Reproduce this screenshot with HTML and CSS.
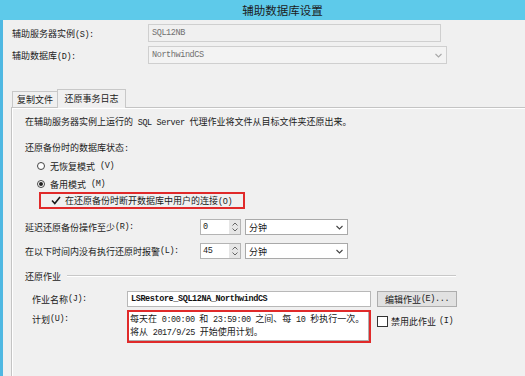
FILE: index.html
```html
<!DOCTYPE html>
<html>
<head>
<meta charset="utf-8">
<link rel="stylesheet" href="styles.css">
</head>
<body>
<div class="titlebar">辅助数据库设置</div>
<div class="main">
  <div class="top">
    <div class="row">
      <div class="lbl">辅助服务器实例<span class="m">(S):</span></div>
      <div class="field f1"><span class="m">SQL12NB</span></div>
    </div>
    <div class="row">
      <div class="lbl">辅助数据库<span class="m">(D):</span></div>
      <div class="field f2"><span class="m">NorthwindCS</span>
        <span class="dd dis"><svg width="7" height="5" viewBox="0 0 7 5"><path d="M0.5 1 L3.5 4 L6.5 1" fill="none" stroke="#a8a8a8" stroke-width="1.1"/></svg></span>
      </div>
    </div>
  </div>

  <div class="tabs">
    <div class="tab">复制文件</div>
    <div class="tab sel">还原事务日志</div>
  </div>

  <div class="panel">
    <div class="intro">在辅助服务器实例上运行的<span class="m"> SQL Server </span>代理作业将文件从目标文件夹还原出来。</div>
    <div class="state">还原备份时的数据库状态<span class="m">:</span></div>
    <div class="radio"><span class="rb"></span>无恢复模式<span class="m">(V)</span></div>
    <div class="radio"><span class="rb on"></span>备用模式<span class="m">(M)</span></div>
    <div class="chkrow">
      <svg class="tick" width="10" height="9" viewBox="0 0 10 9"><path d="M1 4.5 L3.8 7.5 L9 1" fill="none" stroke="#1a1a1a" stroke-width="1.6"/></svg>
      <span>在还原备份时断开数据库中用户的连接<span class="m">(O)</span></span>
    </div>

    <div class="numrow first">
      <div class="nlbl">延迟还原备份操作至少<span class="m">(R):</span></div>
      <div class="spin"><span class="sv m">0</span><span class="sb"><svg width="8" height="12" viewBox="0 0 8 12"><path d="M1.5 4.5 L4 2 L6.5 4.5 M1.5 7.5 L4 10 L6.5 7.5" fill="none" stroke="#666" stroke-width="1"/></svg></span></div>
      <div class="combo">分钟<svg width="7" height="5" viewBox="0 0 7 5"><path d="M0.5 1 L3.5 4 L6.5 1" fill="none" stroke="#444" stroke-width="1.1"/></svg></div>
    </div>
    <div class="numrow">
      <div class="nlbl">在以下时间内没有执行还原时报警<span class="m">(L):</span></div>
      <div class="spin"><span class="sv m">45</span><span class="sb"><svg width="8" height="12" viewBox="0 0 8 12"><path d="M1.5 4.5 L4 2 L6.5 4.5 M1.5 7.5 L4 10 L6.5 7.5" fill="none" stroke="#666" stroke-width="1"/></svg></span></div>
      <div class="combo">分钟<svg width="7" height="5" viewBox="0 0 7 5"><path d="M0.5 1 L3.5 4 L6.5 1" fill="none" stroke="#444" stroke-width="1.1"/></svg></div>
    </div>

    <div class="group">
      <span>还原作业</span><span class="gline"></span>
    </div>
    <div class="jobrow">
      <div class="jlbl">作业名称<span class="m">(J):</span></div>
      <div class="jinput"><span class="m b">LSRestore_SQL12NA_NorthwindCS</span></div>
      <div class="btn">编辑作业<span class="m">(E)...</span></div>
    </div>
    <div class="schedrow">
      <div class="jlbl sl">计划<span class="m">(U):</span></div>
      <div class="redbox">
        <div class="sched">
          <div>每天在<span class="m"> 0:00:00 </span>和<span class="m"> 23:59:00 </span>之间、每<span class="m"> 10 </span>秒执行一次。</div>
          <div>将从<span class="m"> 2017/9/25 </span>开始使用计划。</div>
        </div>
      </div>
      <div class="dis-chk"><span class="cb"></span>禁用此作业<span class="m">(I)</span></div>
    </div>
  </div>
</div>
</body>
</html>
```

FILE: styles.css
```css
* { box-sizing: border-box; margin: 0; padding: 0; }
body {
  width: 525px; height: 376px; overflow: hidden;
  background: #f0f0f0;
  font-family: "Noto Sans CJK SC", "Noto Sans CJK JP", sans-serif;
  font-size: 9px; color: #1a1a1a;
}
.m { font-family: "Liberation Mono", monospace; font-size: 8.5px; letter-spacing: -0.4px; white-space: pre; }
.b { font-weight: bold; }

.titlebar {
  height: 20px; background: #5ecaea;
  display: flex; align-items: center; justify-content: center;
  padding-left: 40px; font-size: 11.5px; color: #1c1c1c;
}
.main { border-left: 3px solid #4fb8e2; height: 356px; overflow: hidden; }

.top { padding: 4px 0 0 9px; display: flex; flex-direction: column; gap: 4px; }
.row { display: flex; align-items: center; }
.lbl { width: 136px; }
.field {
  height: 18px; border: 1px solid #cfcfcf; background: #f0f0f0; color: #707070;
  display: flex; align-items: center; padding-left: 3px;
}
.f1 { width: 293px; }
.f2 { width: 299px; background: #f3f3f3; justify-content: space-between; padding-right: 0; }
.dd { width: 15px; height: 16px; display: flex; align-items: center; justify-content: center; }

.tabs { margin-top: 25px; padding-left: 9px; display: flex; align-items: flex-end; height: 18px; }
.tab {
  height: 16px; width: 46px; border: 1px solid #c8c8c8; border-bottom: none;
  display: flex; align-items: center; justify-content: center; background: #f0f0f0;
}
.tab.sel {
  width: 69px; height: 19px; margin-bottom: -1px; position: relative; z-index: 1;
  border-left: 1px solid #c8c8c8; margin-left: -1px; padding-bottom: 2px;
}

.panel {
  margin-left: 8px; margin-right: -10px; height: 269px;
  border-top: 1px solid #c4c4c4; border-left: 1px solid #c4c4c4;
  box-shadow: inset 1px 1px 0 #fff;
  padding-left: 13px;
}
.intro { margin-top: 8px; height: 12px; line-height: 12px; white-space: nowrap; }
.state { margin-top: 14px; height: 12px; line-height: 12px; }
.radio { margin-top: 6px; height: 12px; display: flex; align-items: center; padding-left: 12px; gap: 5px; }
.rb {
  width: 8px; height: 8px; border-radius: 50%; border: 1px solid #444; background: #fff;
  display: flex; align-items: center; justify-content: center;
}
.rb.on::after { content: ""; width: 4px; height: 4px; border-radius: 50%; background: #222; }

.chkrow {
  margin-top: 2px; margin-left: 14px; width: 206px; height: 17px;
  border: 2px solid #e02a2a; display: flex; align-items: center;
  padding-left: 10px; gap: 4px;
}
.tick { flex: none; }

.numrow { margin-top: 8px; height: 16px; display: flex; align-items: stretch; }
.numrow.first { margin-top: 10px; }
.nlbl { width: 175px; display: flex; align-items: center; }
.spin {
  width: 41px; border: 1px solid #b4b4b4; background: #fff;
  display: flex; align-items: stretch;
}
.sv { flex: 1; display: flex; align-items: center; padding-left: 2px; }
.sb { width: 12px; background: #e6e6e6; display: flex; align-items: center; justify-content: center; border-left: 1px solid #fff; }
.combo {
  margin-left: 4px; width: 103px; border: 1px solid #a9a9a9; background: #fff;
  display: flex; align-items: center; justify-content: space-between; padding: 0 4px 0 3px;
}

.group { margin-top: 11px; height: 12px; width: 431px; display: flex; align-items: center; gap: 6px; }
.gline { flex: 1; height: 1px; background: #c8c8c8; border-bottom: 1px solid #fff; box-sizing: content-box; }

.jobrow { margin-top: 9px; padding-left: 7px; height: 16px; display: flex; align-items: stretch; }
.jlbl { width: 95px; display: flex; align-items: center; }
.jinput {
  width: 244px; border: 1px solid #b8b8b8; background: #fff;
  display: flex; align-items: center; padding-left: 3px; color: #111;
}
.btn {
  margin-left: 6px; width: 80px; border: 1px solid #adadad; background: #e1e1e1;
  display: flex; align-items: center; justify-content: center;
}

.schedrow { margin-top: 3px; padding-left: 7px; display: flex; align-items: flex-start; }
.sl { height: 16px; margin-top: 1px; }
.redbox { width: 244px; height: 33px; border: 2px solid #e02a2a; background: #fff; }
.sched {
  height: 100%; border-right: 1px solid #b0b0b0; border-bottom: 1px solid #b0b0b0;
  padding: 1px 0 0 1px; line-height: 11px; white-space: nowrap;
}
.dis-chk { margin-left: 6px; margin-top: 5px; display: flex; align-items: center; gap: 3px; height: 12px; }
.cb { width: 11px; height: 11px; border: 1px solid #333; background: #fff; }
```
